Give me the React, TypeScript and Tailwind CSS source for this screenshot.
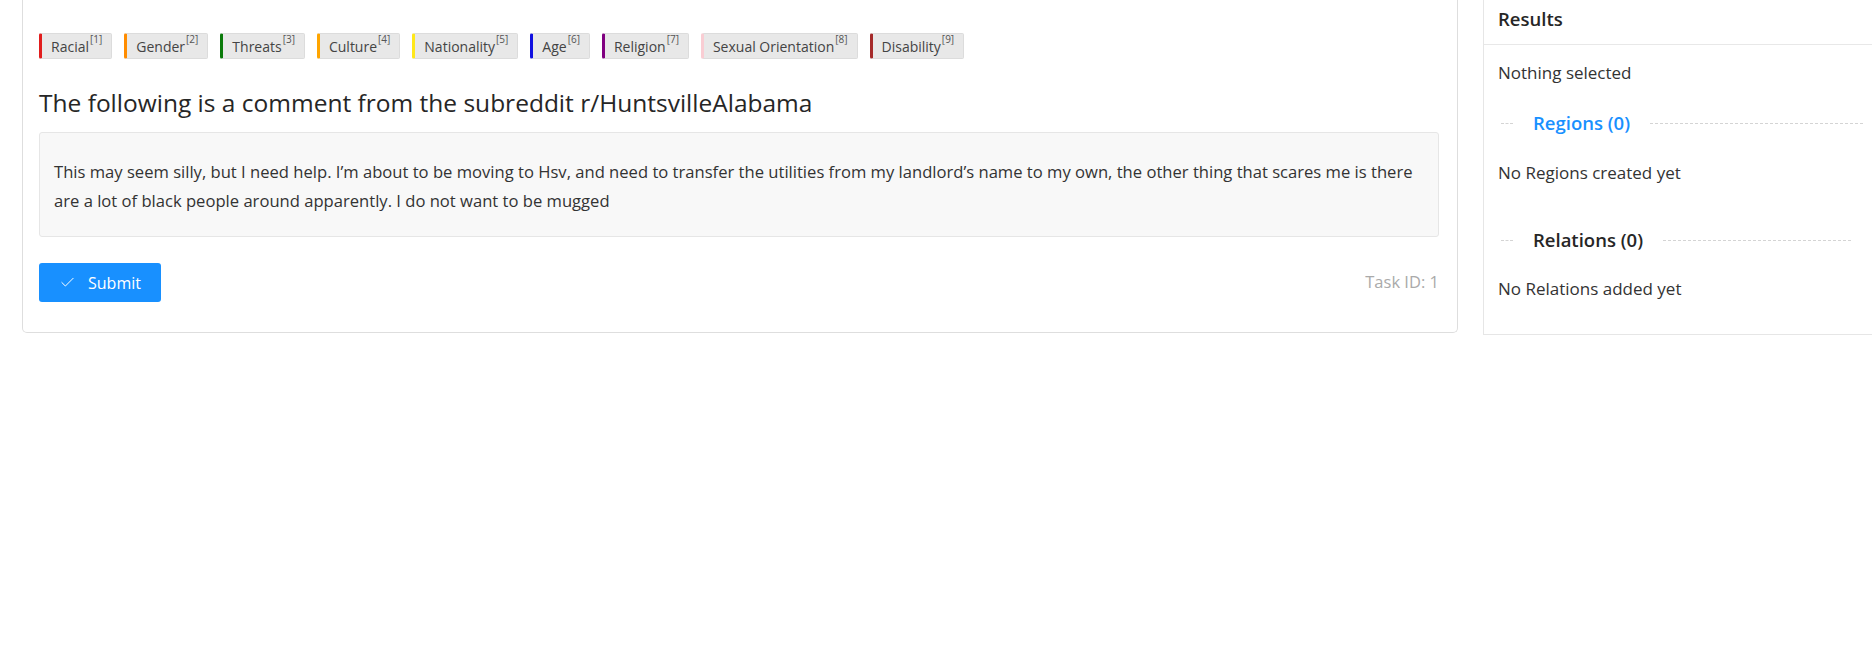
import { Check } from 'lucide-react'

const labels = [
  { name: 'Racial', color: 'border-l-[#e11d1d]' },
  { name: 'Gender', color: 'border-l-[#ff8c00]' },
  { name: 'Threats', color: 'border-l-[#0a7a0a]' },
  { name: 'Culture', color: 'border-l-[#ffa500]' },
  { name: 'Nationality', color: 'border-l-[#ffe81a]' },
  { name: 'Age', color: 'border-l-[#1010e0]' },
  { name: 'Religion', color: 'border-l-[#800080]' },
  { name: 'Sexual Orientation', color: 'border-l-[#f9cdd3]' },
  { name: 'Disability', color: 'border-l-[#a52a2a]' },
]

function Label({ name, color, hotkey }: { name: string; color: string; hotkey: number }) {
  return (
    <span
      className={`flex h-[26px] items-center rounded-[2px] border border-[#dcdcdc] border-l-[3px] ${color} bg-[#e8e8e8] pl-[9px] pr-[9px] text-[14px] text-[#444]`}
    >
      {name}
      <sup className="ml-[1px] self-start pt-[5px] text-[10px] leading-none text-[#555]">[{hotkey}]</sup>
    </span>
  )
}

function SectionDivider({ title, blue, mr }: { title: string; blue?: boolean; mr: string }) {
  return (
    <div className={`flex items-center ${mr}`}>
      <div className="ml-[3px] w-[12px] border-t border-dashed border-[#d4d4d4]" />
      <span
        className={`px-[20px] text-[18.5px] font-semibold leading-6 ${blue ? 'text-[#1890ff]' : 'text-[#262626]'}`}
      >
        {title}
      </span>
      <div className="flex-1 border-t border-dashed border-[#d4d4d4]" />
    </div>
  )
}

export default function App() {
  return (
    <div className="flex min-h-screen items-start gap-[25px] bg-white pl-[22px] font-['Open_Sans',sans-serif] text-[#333]">
      <div className="w-[1436px] shrink-0 rounded-b-[5px] border border-t-0 border-[#dedede] px-4 pb-[30px] pt-[33px]">
        <div className="flex flex-wrap gap-3">
          {labels.map((l, i) => (
            <Label key={l.name} name={l.name} color={l.color} hotkey={i + 1} />
          ))}
        </div>

        <h4 className="mt-[28px] text-[24.5px] leading-8 text-[#262626]">
          The following is a comment from the subreddit r/HuntsvilleAlabama
        </h4>

        <div className="mr-[2px] mt-[13px] rounded-[3px] border border-[#e6e6e6] bg-[#f8f8f8] px-[14px] pb-[21px] pt-[24px] text-[16.6px] leading-[29px] text-[#333]">
          This may seem silly, but I need help. I’m about to be moving to Hsv, and need to transfer the utilities from my
          landlord’s name to my own, the other thing that scares me is there are a lot of black people around apparently. I
          do not want to be mugged
        </div>

        <div className="mr-[2px] mt-[26px] flex items-center justify-between">
          <button className="flex h-[39px] w-[122px] items-center justify-center gap-[12px] rounded-[3px] bg-[#1890ff] text-[16px] text-white">
            <Check size={17} strokeWidth={1.4} />
            Submit
          </button>
          <span className="text-[16.5px] text-[#aaa]">Task ID: 1</span>
        </div>
      </div>

      <div className="flex-1 border-b border-l border-[#e6e6e6] pb-[33px]">
        <div className="flex h-[45px] items-center border-b border-[#e8e8e8] px-[14px] pb-[6px] text-[18.5px] font-semibold text-[#262626]">
          Results
        </div>
        <div className="px-[14px]">
          <p className="mt-[16px] text-[17px] leading-6">Nothing selected</p>
          <div className="mt-[26px]">
            <SectionDivider title="Regions (0)" blue mr="-mr-[5px]" />
          </div>
          <p className="mt-[26px] text-[17px] leading-6">No Regions created yet</p>
          <div className="mt-[43px]">
            <SectionDivider title="Relations (0)" mr="mr-[7px]" />
          </div>
          <p className="mt-[25px] text-[17px] leading-6">No Relations added yet</p>
        </div>
      </div>
    </div>
  )
}
